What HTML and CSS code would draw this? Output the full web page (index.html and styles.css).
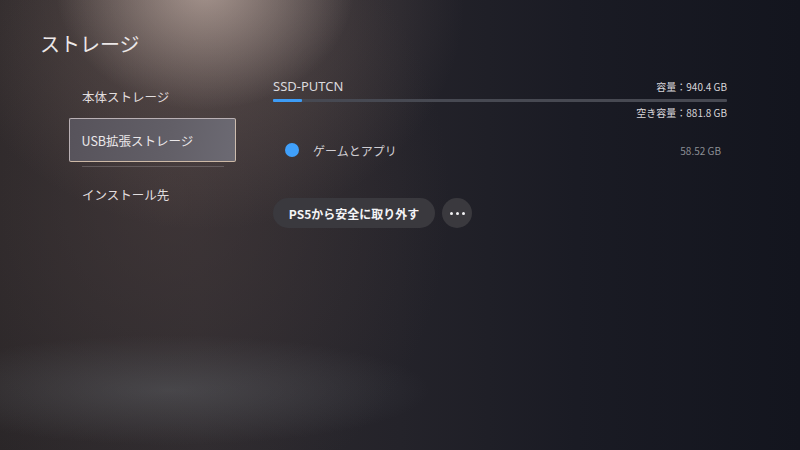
FILE: index.html
```html
<!DOCTYPE html>
<html lang="ja">
<head>
<meta charset="utf-8">
<title>ストレージ</title>
<link rel="stylesheet" href="styles.css">
</head>
<body>
<div class="screen">
  <h1 class="title">ストレージ</h1>
  <div class="main">
    <nav class="nav">
      <div class="nav-item">本体ストレージ</div>
      <div class="nav-item selected">USB拡張ストレージ</div>
      <div class="nav-sep"></div>
      <div class="nav-item">インストール先</div>
    </nav>
    <section class="panel">
      <div class="head">
        <span class="name">SSD-PUTCN</span>
        <span class="cap">容量：940.4 GB</span>
      </div>
      <div class="bar"><div class="fill" style="width:6.3%"></div></div>
      <div class="free">空き容量：881.8 GB</div>
      <div class="row">
        <span class="dot"></span>
        <span class="label">ゲームとアプリ</span>
        <span class="size">58.52 GB</span>
      </div>
      <div class="actions">
        <button class="btn">PS5から安全に取り外す</button>
        <button class="more"><span></span><span></span><span></span></button>
      </div>
    </section>
  </div>
</div>
</body>
</html>
```

FILE: styles.css
```css
* { box-sizing: border-box; }
html, body { margin: 0; padding: 0; }
body {
  font-family: "Noto Sans CJK JP", "Noto Sans", sans-serif;
  color: #e6e2e2;
}
.screen {
  width: 800px;
  height: 450px;
  overflow: hidden;
  background:
    radial-gradient(ellipse 150px 125px at 205px -15px, rgba(215,195,185,0.6), rgba(215,195,185,0) 100%),
    radial-gradient(ellipse 260px 230px at 205px 0px, rgba(150,125,115,0.4), rgba(150,125,115,0) 100%),
    radial-gradient(ellipse 260px 55px at 170px 390px, rgba(105,110,115,0.38), rgba(105,110,115,0) 100%),
    radial-gradient(ellipse 280px 320px at 170px 200px, rgba(75,62,62,0.55), rgba(75,62,62,0) 100%),
    linear-gradient(90deg, #2a2628 0%, #2d2a2e 25%, #24232a 50%, #1a1b24 72%, #13151e 100%);
}
.title {
  margin: 0;
  padding: 30px 0 0 40px;
  font-size: 20px;
  line-height: 28px;
  font-weight: 400;
  color: #ece8e8;
}
.main {
  display: grid;
  grid-template-columns: 167px 454px;
  column-gap: 37px;
  margin: 16px 0 0 69px;
}
.nav { display: flex; flex-direction: column; }
.nav-item {
  height: 44px;
  display: flex;
  align-items: center;
  padding-left: 13px;
  font-size: 12.5px;
  color: #e2dedf;
}
.nav-item.selected {
  border: 1.5px solid #b9b0b4;
  border-right-color: #cdbcae;
  border-bottom-color: #cdb9a6;
  border-radius: 2px;
  padding-left: 11.5px;
  background: linear-gradient(100deg, #57535b 0%, #625f67 60%, #6c6a73 100%);
  color: #ebe8ea;
}
.nav-sep {
  height: 1px;
  margin: 4px 12px 5px 13px;
  background: rgba(140,132,135,0.45);
}
.panel { display: flex; flex-direction: column; padding-top: 1px; }
.head {
  display: flex;
  justify-content: space-between;
  align-items: center;
  height: 22px;
}
.name { font-family: "Noto Sans", sans-serif; font-size: 13px; color: #dcdade; }
.cap { font-size: 10px; color: #d8d6da; }
.bar {
  margin-top: 2px;
  height: 3px;
  background: #474952;
  border-radius: 1px;
}
.fill { height: 100%; background: #3d9cf6; border-radius: 1px; }
.free {
  text-align: right;
  font-size: 10px;
  line-height: 14px;
  margin-top: 4px;
  color: #d8d6da;
}
.row {
  display: flex;
  align-items: center;
  height: 32px;
  margin-top: 14px;
  padding: 0 6px 0 12px;
}
.dot {
  width: 14px;
  height: 14px;
  border-radius: 50%;
  background: #40a0fb;
}
.label {
  margin-left: 14px;
  font-size: 12px;
  color: #cfcdd2;
  flex: 1;
}
.size { font-size: 10px; color: #8c8e95; }
.actions {
  display: flex;
  gap: 7px;
  margin-top: 32px;
}
.btn {
  height: 30px;
  width: 162px;
  border: none;
  border-radius: 15px;
  background: #3a393e;
  color: #f4f4f6;
  font-family: inherit;
  font-size: 12px;
  font-weight: 700;
  padding: 0;
}
.more {
  width: 30px;
  height: 30px;
  border: none;
  border-radius: 50%;
  background: #3a393e;
  display: flex;
  align-items: center;
  justify-content: center;
  gap: 3px;
  padding: 0;
}
.more span {
  width: 3px;
  height: 3px;
  border-radius: 50%;
  background: #f2f2f4;
}
```
